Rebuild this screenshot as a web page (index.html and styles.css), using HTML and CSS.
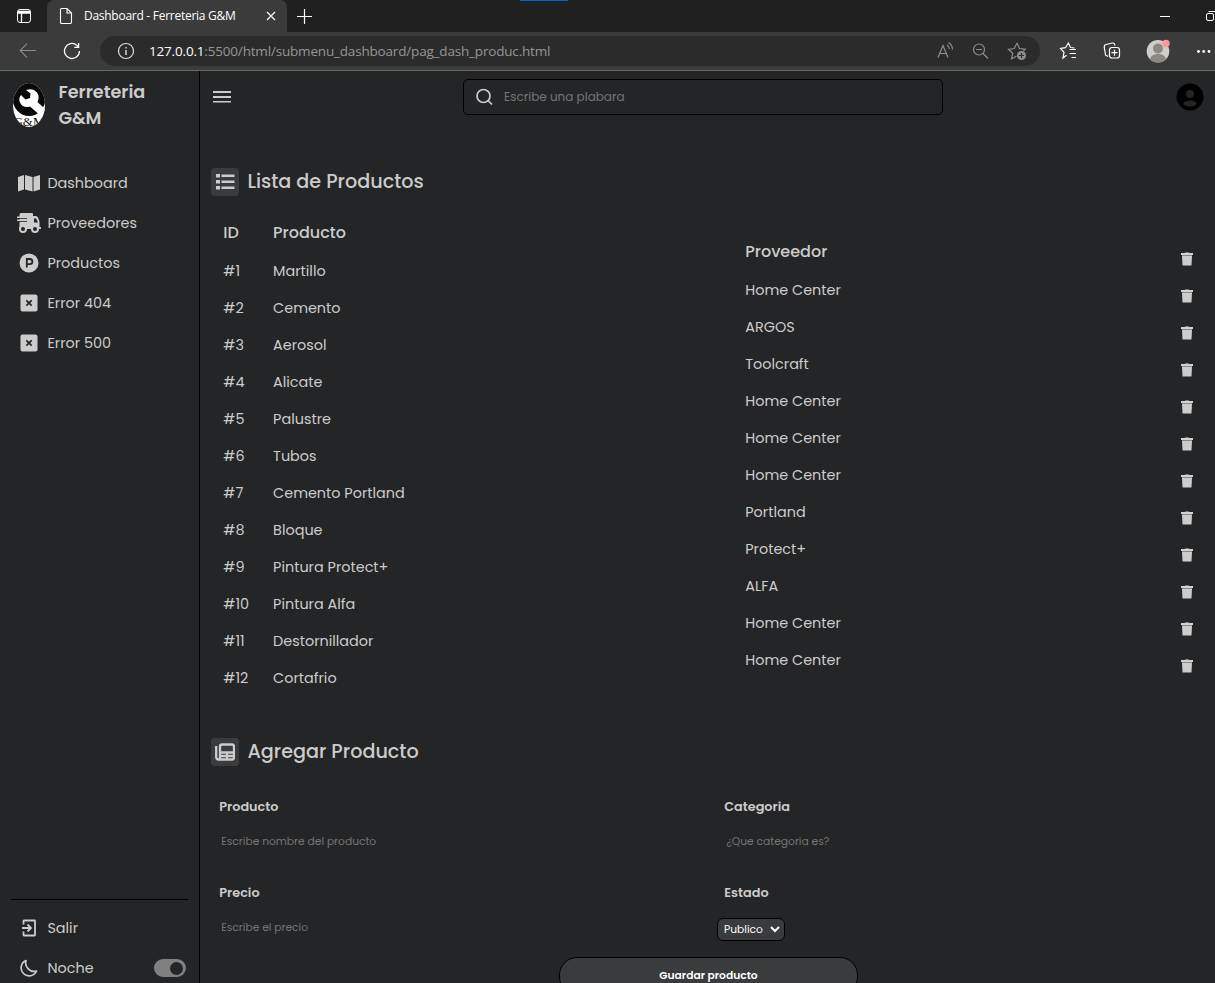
FILE: index.html
```
<!DOCTYPE html>
<html lang="es">
<head>
<meta charset="utf-8">
<title>Dashboard - Ferreteria G&amp;M</title>
<link rel="stylesheet" href="styles.css">
</head>
<body>
<svg width="0" height="0" class="defs">
  <symbol id="trash" viewBox="0 0 14 16"><path fill="#777" d="M5 1h4v1H5z"/><path fill="#d2d2d2" d="M1 2h12v2H1z"/><path fill="#888" d="M2 4h10v1H2z"/><path fill="#ccc" d="M2 5h10l-.5 9.500H2.500z"/></symbol>
  <symbol id="errorbox" viewBox="0 0 18 18"><rect x=".5" y=".5" width="17" height="17" rx="2" fill="#ccc"/><path d="M6.300 6.300l5.400 5.400M11.700 6.300l-5.400 5.400" stroke="#242526" stroke-width="1.700"/></symbol>
</svg>
<header class="browser">
  <div class="tabs">
    <svg class="winicon" width="16" height="16" viewBox="0 0 16 16" fill="none" stroke="#fff"><rect x="1.500" y="1.500" width="13" height="13" rx="2.500"/><path d="M2 3.500h12M2 5h12M5.500 5v9.500" stroke-width="1.300"/></svg>
    <div class="tab">
      <svg width="14" height="18" viewBox="0 0 14 18" fill="none" stroke="#fff" stroke-width="1.100"><path d="M2.500 1.500h5.500l4.500 4.500v9a1.500 1.500 0 0 1-1.500 1.500h-8.500a1 1 0 0 1-1-1v-13a1 1 0 0 1 1-1zM8 1.500v4.500h4.500"/></svg>
      <span class="tabtitle">Dashboard - Ferreteria G&amp;M</span>
      <svg class="close" width="10" height="10" viewBox="0 0 10 10" stroke="#fff" stroke-width="1.200"><path d="M1 1l8 8M9 1l-8 8"/></svg>
    </div>
    <svg class="plus" width="15" height="15" viewBox="0 0 15 15" stroke="#fff" stroke-width="1.200"><path d="M7.500 0v15M0 7.500h15"/></svg>
    <i class="accent"></i>
    <svg class="winctl" width="56" height="12" viewBox="0 0 56 12" fill="none" stroke="#fff"><path d="M1 6.500h10"/><rect x="47.500" y="3.500" width="7" height="7" rx="1.500"/><path d="M49.500 1.500h6.500"/></svg>
  </div>
  <div class="toolbar">
    <svg class="back" width="18" height="16" viewBox="0 0 18 16" fill="none" stroke="#8a8a8a" stroke-width="1.100"><path d="M17 7.500H1.500M8 .7L1.200 7.500 8 14.300"/></svg>
    <svg class="reload" width="18" height="18" viewBox="0 0 18 18" fill="none" stroke="#fff" stroke-width="1.300"><path d="M16.500 9a7.500 7.500 0 1 1-2.800-5.850L15.300 5M15.600 1v4.300h-4.300"/></svg>
    <div class="address">
      <svg width="18" height="18" viewBox="0 0 18 18" fill="none" stroke="#ddd" stroke-width="1.200"><circle cx="9" cy="9" r="7.500"/><path d="M9 8v5M9 5v1.500" stroke-width="1.400"/></svg>
      <span class="url"><b>127.0.0.1</b>:5500/html/submenu_dashboard/pag_dash_produc.html</span>
      <svg class="aicons" width="90" height="20" viewBox="0 0 90 20" fill="none" stroke="#8d8d8d" stroke-width="1.200"><path d="M1 16.500L6 4.500l5 12M2.800 12.500h6.400M10 4q2.200 1.500 2.500 4M11.500 1.500q4 2.500 4 7"/><circle cx="42" cy="8.500" r="5.500"/><path d="M39 8.500h6M46 12.500l5 5"/><path d="M79.500 15.300l-5 2.500 1.300-5.500-4.300-4 5.700-.8L80 2.300l2.500 5.200 5.700.8-2 2"/><circle cx="84.500" cy="14.500" r="4.500" fill="#8d8d8d" stroke="none"/><path d="M84.500 12v5M82 14.500h5" stroke="#2b2b2b"/></svg>
    </div>
    <svg class="bicons" width="156" height="26" viewBox="0 0 156 26" fill="none" stroke="#fff" stroke-width="1.200"><path d="M8.500 17.300L5 20l1-5.700L2.500 10.500l5-.8L10.300 5l2.200 4.500 4 .5M11.500 11.500H18M11.500 15.500H18M13.500 19.500H18"/><path d="M50 18.500l-2.500-1.500-1.300-8Q46 7 48 6.500L54.500 5q2-.2 2.500 2.500"/><rect x="51.500" y="9.500" width="10" height="10.500" rx="2.500"/><path d="M56.500 11.700v6M53.500 14.700h6"/><g stroke="none"><circle cx="100" cy="13.300" r="11.300" fill="#cfcdca"/><circle cx="100" cy="10.500" r="5" fill="#8b8884"/><path d="M92 21.300a8 5.500 0 0 1 16 0 11.300 11.300 0 0 1-16 0z" fill="#8b8884"/><circle cx="108" cy="5.500" r="3.700" fill="#f99"/><g fill="#fff"><circle cx="140.500" cy="13.500" r="1.400"/><circle cx="145.700" cy="13.500" r="1.400"/><circle cx="151" cy="13.500" r="1.400"/></g></g></svg>
  </div>
</header>
<div class="app">
  <nav class="sidebar">
    <div class="brand">
      <svg width="34" height="46" viewBox="0 0 34 46"><defs><clipPath id="oval"><ellipse cx="17" cy="23" rx="16" ry="22"/></clipPath></defs><g clip-path="url(#oval)"><rect width="34" height="46" fill="#fff"/><ellipse cx="17" cy="16" rx="16.500" ry="18" fill="#080808"/><path d="M14 8q7-2.500 11 2.500 3 4 .5 9.500L34 28l-5 6-11-9.500q-7 2-10-4-2-4 1-7.500l4.500 4.500 4.500-1.500.5-4.500z" fill="#fff"/><text x="17" y="44" text-anchor="middle" class="logotext">G&amp;M</text></g></svg>
      <div class="brandname">Ferreteria<br>G&amp;M</div>
    </div>
    <ul class="menu">
      <li><svg width="24" height="18" viewBox="0 0 24 18" fill="#ccc"><path d="M1 3l6-2v14.500l-6 2zM8 1l7.500 2v14.500L8 15.500zM16.500 3L23 1v14.500l-6.500 2z"/></svg><span>Dashboard</span></li>
      <li><svg width="26" height="22" viewBox="0 0 26 22"><path fill="#ccc" d="M5 1h11q1 0 1 1v2h3q1 0 2 1.500l1.500 4V15h1.500v2H3.500V3q0-2 1.500-2z"/><path fill="#ccc" d="M1 4.500h10V6H1zM1 7.500h10V9H1z"/><path stroke="#242526" d="M2 6.500h9M2 9.500h9" stroke-width=".8"/><path fill="#242526" d="M18 6.500h2l2 4h-4z"/><g fill="#242526" stroke="#ccc" stroke-width="2"><circle cx="7" cy="17" r="3"/><circle cx="19" cy="17" r="3"/></g></svg><span>Proveedores</span></li>
      <li><svg width="20" height="20" viewBox="0 0 20 20"><circle cx="10" cy="10" r="9.500" fill="#ccc"/><path d="M7.800 14.500V6h3a2.600 2.600 0 0 1 0 5.200h-3" fill="none" stroke="#242526" stroke-width="1.800"/></svg><span>Productos</span></li>
      <li><svg width="18" height="18"><use href="#errorbox"/></svg><span>Error 404</span></li>
      <li><svg width="18" height="18"><use href="#errorbox"/></svg><span>Error 500</span></li>
    </ul>
    <ul class="bottom">
      <li><svg width="18" height="18" viewBox="0 0 18 18" fill="none" stroke="#ccc" stroke-width="1.800"><path d="M3.500 5.500V2q0-.5.500-.5h10.500q.5 0 .5.500v14q0 .5-.5.500H4q-.5 0-.5-.5v-3.500M2 9h9M7.500 5.500L11 9l-3.500 3.500"/></svg><span>Salir</span></li>
      <li><svg width="18" height="18" viewBox="0 0 18 18" fill="none" stroke="#ccc" stroke-width="1.700" stroke-linejoin="round"><path d="M6 1.500A8 8 0 1 0 16.500 12 8.500 8.500 0 0 1 6 1.500z"/></svg><span>Noche</span><i class="switch"></i></li>
    </ul>
  </nav>
  <main>
    <div class="topbar">
      <svg class="burger" width="18" height="12" viewBox="0 0 18 12" fill="#ccc"><path d="M0 0h18v2H0zM0 5h18v2H0zM0 10h18v1.600H0z"/></svg>
      <div class="search"><svg width="18" height="18" viewBox="0 0 18 18" fill="none" stroke="#ccc" stroke-width="1.700"><circle cx="7.500" cy="8" r="6.500"/><path d="M12 12.500l4 4"/></svg><span>Escribe una plabara</span></div>
      <svg class="user" width="28" height="28" viewBox="0 0 28 28"><circle cx="14" cy="14" r="13.500"/><g fill="#242526"><circle cx="14" cy="11" r="4"/><ellipse cx="14" cy="20.500" rx="6.500" ry="3"/></g></svg>
    </div>
    <h2 class="title"><span class="tile"><svg width="20" height="18" viewBox="0 0 20 18" fill="#ccc"><path d="M1 1h4v3.500H1zM1 7h4v3.500H1zM1 13h4v3.500H1zM6.500 1.500h13V4h-13zM6.500 7.500h13V10h-13zM6.500 13.500h13V16h-13z"/></svg></span><span class="text">Lista de Productos</span></h2>
    <div class="table">
      <ul class="ids"><li class="th">ID</li><li>#1</li><li>#2</li><li>#3</li><li>#4</li><li>#5</li><li>#6</li><li>#7</li><li>#8</li><li>#9</li><li>#10</li><li>#11</li><li>#12</li></ul>
      <ul class="products"><li class="th">Producto</li><li>Martillo</li><li>Cemento</li><li>Aerosol</li><li>Alicate</li><li>Palustre</li><li>Tubos</li><li>Cemento Portland</li><li>Bloque</li><li>Pintura Protect+</li><li>Pintura Alfa</li><li>Destornillador</li><li>Cortafrio</li></ul>
      <ul class="suppliers"><li class="th">Proveedor</li><li>Home Center</li><li>ARGOS</li><li>Toolcraft</li><li>Home Center</li><li>Home Center</li><li>Home Center</li><li>Portland</li><li>Protect+</li><li>ALFA</li><li>Home Center</li><li>Home Center</li></ul>
      <ul class="actions"><li><svg><use href="#trash"/></svg></li><li><svg><use href="#trash"/></svg></li><li><svg><use href="#trash"/></svg></li><li><svg><use href="#trash"/></svg></li><li><svg><use href="#trash"/></svg></li><li><svg><use href="#trash"/></svg></li><li><svg><use href="#trash"/></svg></li><li><svg><use href="#trash"/></svg></li><li><svg><use href="#trash"/></svg></li><li><svg><use href="#trash"/></svg></li><li><svg><use href="#trash"/></svg></li><li><svg><use href="#trash"/></svg></li></ul>
    </div>
    <h2 class="title second"><span class="tile"><svg width="20" height="18" viewBox="0 0 20 18" fill="none" stroke="#ccc" stroke-width="2.300"><path d="M1.200 3v11q0 2.500 2.500 2.500H17q2 0 2-2V3.500q0-2-2-2H7q-2 0-2 2V16M5 9.500h14M5 13h14M12 9.500V16"/></svg></span><span class="text">Agregar Producto</span></h2>
    <div class="form">
      <div class="field"><b>Producto</b><span class="ph">Escribe nombre del producto</span></div>
      <div class="field"><b>Categoria</b><span class="ph">¿Que categoria es?</span></div>
      <div class="field"><b>Precio</b><span class="ph">Escribe el precio</span></div>
      <div class="field"><b>Estado</b><span class="select">Publico<svg width="10" height="7" viewBox="0 0 10 7" fill="none" stroke="#fff" stroke-width="2"><path d="M1 1l4 4 4-4"/></svg></span></div>
    </div>
    <div class="save">Guardar producto</div>
  </main>
</div>
</body>
</html>
```
FILE: styles.css
```
* { box-sizing: border-box; }
body { margin: 0; height: 983px; overflow: hidden; background: #242526; color: #ccc; font: 14.4px Poppins, Inter, sans-serif; }
ul { list-style: none; margin: 0; padding: 0; }
svg { display: block; flex: none; }
.defs { position: absolute; }
.browser { height: 71px; border-bottom: 1px solid #686b6b; font-family: "Segoe UI", "Open Sans", sans-serif; }
.tabs { height: 32px; display: flex; align-items: center; background: #202020; position: relative; }
.winicon { margin-left: 16px; }
.tab { margin-left: 15px; width: 240px; height: 32px; background: #3b3b3b; border-radius: 7px 7px 0 0; display: flex; align-items: center; padding: 0 11px 0 12px; color: #fff; }
.tabtitle { margin-left: 11px; font-size: 12px; letter-spacing: -.27px; white-space: nowrap; padding-bottom: 1px; }
.close { margin-left: auto; }
.plus { margin-left: 10px; }
.accent { position: absolute; left: 520px; top: 0; width: 48px; height: 1px; background: #0067c0; }
.winctl { margin-left: auto; }
.toolbar { height: 38px; background: #3b3b3b; display: flex; align-items: center; }
.back { margin-left: 19px; }
.reload { margin-left: 26px; }
.address { margin-left: 19px; width: 940px; height: 30px; border-radius: 15px; background: #2b2b2b; display: flex; align-items: center; padding: 0 13px 0 17px; }
.url { margin-left: 14px; font-size: 13.500px; letter-spacing: -.18px; color: #969696; white-space: nowrap; }
.url b { font-weight: 400; color: #fff; }
.aicons { margin-left: auto; }
.bicons { margin-left: 18px; }
.app { display: flex; height: 912px; }
.sidebar { width: 200px; flex: none; border-right: 1px solid #000; padding: 11px 11px 0; display: flex; flex-direction: column; }
.brand { display: flex; height: 81px; padding-left: 1px; }
.brandname { margin: -3px 0 0 12.400px; font-size: 17.600px; font-weight: 600; line-height: 26px; }
.logotext { font: 13px "Liberation Serif", serif; fill: #111; }
.menu li, .bottom li { height: 40px; display: flex; align-items: center; }
.menu span, .bottom span { padding: 1px 0 0 .4px; }
.menu svg, .bottom svg { width: 36px; margin-bottom: 1px; }
.bottom { margin-top: auto; border-top: 1px solid #000; padding-top: 8px; margin-bottom: -5px; }
.switch { margin: 0 2px 0 auto; width: 32px; height: 18px; border-radius: 9px; background: #808080; display: flex; align-items: center; justify-content: flex-end; padding-right: 3px; }
.switch::after { content: ""; width: 13px; height: 13px; border-radius: 50%; background: #242526; }
main { flex: 1; min-width: 0; padding-left: 11px; }
.topbar { height: 53px; display: flex; align-items: center; padding: 0 11px 2px 2px; }
.burger { margin-top: 1px; }
.search { margin-left: 232px; width: 480px; height: 36px; border: 1px solid #000; border-radius: 5px; display: flex; align-items: center; padding-left: 12px; gap: 10px; font-size: 12px; color: #757575; }
.user { margin-left: auto; }
.title { margin: 44px 0 0; height: 28px; display: flex; align-items: center; gap: 8.400px; font-size: 19.200px; font-weight: 500; }
.title .text { padding-bottom: 1px; }
.tile { width: 28px; height: 28px; border-radius: 4px; background: #3a3b3c; display: flex; align-items: center; justify-content: center; }
.table { margin-top: 16px; height: 484px; display: flex; padding-left: 12.300px; }
.table li { height: 37px; display: flex; align-items: center; white-space: nowrap; padding-top: 1px; }
.table li.th { height: 40px; font-size: 16px; font-weight: 500; padding-top: 0; }
.ids { width: 49.800px; }
.products { width: 472.200px; }
.suppliers { width: 435.200px; padding-top: 19px; }
.table .actions { padding-top: 28px; }
.table .actions li { padding-top: 0; }
.actions svg { width: 14px; height: 16px; }
.second { margin-top: 42px; }
.form { display: grid; grid-template-columns: 505px 1fr; grid-auto-rows: 86px; padding: 30px 0 0 8.300px; height: 191px; }
.field b { display: block; height: 20px; line-height: 21px; font-size: 12.800px; font-weight: 600; }
.ph { display: block; margin: 16px 0 0 2px; line-height: 20px; font-size: 10.700px; color: #757575; }
.select { margin: 16px 0 0 -7.300px; width: 68px; height: 23px; border: 1px solid #000; border-radius: 6px; background: #3a3b3c; color: #fff; font-size: 10.700px; display: flex; align-items: center; justify-content: space-between; padding: 0 4px 0 6px; }
.save { margin-left: 348px; width: 299px; height: 38px; border: 1px solid #000; border-radius: 18px; background: #3a3b3c; color: #fff; font-size: 10.700px; font-weight: 600; display: flex; align-items: center; justify-content: center; }
```
